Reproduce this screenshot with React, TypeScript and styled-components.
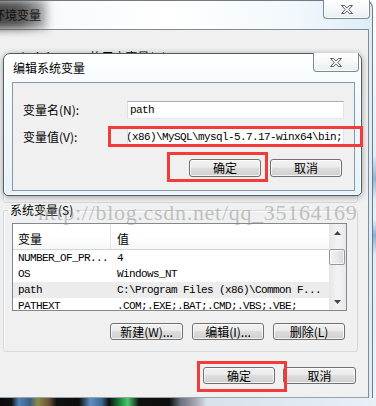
import React from 'react';
import styled, { createGlobalStyle } from 'styled-components';

const GlobalStyle = createGlobalStyle`
  * { box-sizing: border-box; }
  html, body { margin: 0; padding: 0; }
  body {
    width: 376px;
    height: 406px;
    overflow: hidden;
    font-family: "Noto Sans CJK SC", "Liberation Sans", sans-serif;
    font-size: 12px;
    color: #000;
  }
`;

const mono = `"Liberation Mono", "DejaVu Sans Mono", monospace`;

const systemVars = [
  { name: 'NUMBER_OF_PR...', value: '4' },
  { name: 'OS', value: 'Windows_NT' },
  { name: 'path', value: 'C:\\Program Files (x86)\\Common F...', selected: true },
  { name: 'PATHEXT', value: '.COM;.EXE;.BAT;.CMD;.VBS;.VBE;' },
];

const CloseGlyph = () => (
  <svg width="14" height="11" viewBox="0 0 14 11">
    <polygon
      points="1.5,1.5 4.6,1.5 7,3.9 9.4,1.5 12.5,1.5 8.8,5.5 12.5,9.5 9.4,9.5 7,7.1 4.6,9.5 1.5,9.5 5.2,5.5"
      fill="#f3f3f3"
      stroke="#5c5c5c"
      strokeWidth="1"
      strokeLinejoin="round"
    />
  </svg>
);

const Arrow = ({ up }: { up?: boolean }) => (
  <svg width="7" height="4" viewBox="0 0 7 4">
    <polygon points={up ? '0,4 3.5,0 7,4' : '0,0 3.5,4 7,0'} fill="#444" />
  </svg>
);

export default function App() {
  return (
    <>
      <GlobalStyle />
      <Screen>
        <Window>
          <TitleBar>
            <Title>环境变量</Title>
            <CloseButton $w={47}>
              <CloseGlyph />
            </CloseButton>
          </TitleBar>
          <Client>
            <UserGroup>
              <Legend>Administrator 的用户变量(U)</Legend>
            </UserGroup>
            <GroupBox>
              <Legend>系统变量(S)</Legend>
              <ListView>
                <ListBody>
                  <HeaderRow>
                    <HeaderCell $first>变量</HeaderCell>
                    <HeaderCell>值</HeaderCell>
                  </HeaderRow>
                  {systemVars.map((v) => (
                    <Row key={v.name} $selected={!!v.selected}>
                      <Cell $first>{v.name}</Cell>
                      <Cell>{v.value}</Cell>
                    </Row>
                  ))}
                </ListBody>
                <ScrollBar>
                  <ArrowBox>
                    <Arrow up />
                  </ArrowBox>
                  <Track>
                    <Thumb />
                  </Track>
                  <ArrowBox>
                    <Arrow />
                  </ArrowBox>
                </ScrollBar>
              </ListView>
              <ButtonRow $top={12} $right={2}>
                <Button $w={73} $h={17}>新建(W)...</Button>
                <Button $w={72} $h={17}>编辑(I)...</Button>
                <Button $w={72} $h={17}>删除(L)</Button>
              </ButtonRow>
            </GroupBox>
            <ButtonRow $top={15} $right={2} $gap={8}>
              <Button $w={72} $h={17}>确定</Button>
              <Button $w={73} $h={17}>取消</Button>
            </ButtonRow>
          </Client>
        </Window>
        <Taskbar />

        <Dialog>
          <DialogTitleBar>
            <DialogTitle>编辑系统变量</DialogTitle>
            <CloseButton $w={46}>
              <CloseGlyph />
            </CloseButton>
          </DialogTitleBar>
          <DialogClient>
            <FieldRow>
              <FieldLabel>变量名(N):</FieldLabel>
              <TextBox>path</TextBox>
            </FieldRow>
            <FieldRow $top={9}>
              <FieldLabel>变量值(V):</FieldLabel>
              <TextBox $indent={-2}>(x86)\MySQL\mysql-5.7.17-winx64\bin;</TextBox>
            </FieldRow>
            <ButtonRow $top={13} $right={2}>
              <Button $w={72} $h={18}>确定</Button>
              <Button $w={72} $h={18}>取消</Button>
            </ButtonRow>
          </DialogClient>
        </Dialog>

        <Watermark>http://blog.csdn.net/qq_35164169</Watermark>

        <Highlight style={{ left: 108, top: 126, width: 255, height: 21 }} />
        <Highlight style={{ left: 167, top: 152, width: 101, height: 30 }} />
        <Highlight style={{ left: 197, top: 361, width: 90, height: 31 }} />
      </Screen>
    </>
  );
}

const Screen = styled.div`
  position: relative;
  width: 376px;
  height: 406px;
  overflow: hidden;
  display: flex;
  flex-direction: column;
  background: linear-gradient(
    180deg,
    #ffffff 0%,
    #e4eef6 38%,
    #8fb4d8 44%,
    #e2edf6 49%,
    #e8f1f8 54%,
    #86afd8 58%,
    #e4edf6 63%,
    #eef4f9 100%
  );
`;

const Window = styled.div`
  flex: 1;
  display: flex;
  flex-direction: column;
  margin-right: 3px;
  border-top: 1px solid #6f7a83;
  border-right: 1px solid #6f7a83;
  border-top-right-radius: 8px;
  background: linear-gradient(90deg, #f4f7f9 0%, #ffffff 45%, #f2f8fc 80%, #dcedf8 100%);
`;

const TitleBar = styled.div`
  height: 28px;
  flex: none;
  display: flex;
  align-items: flex-start;
`;

const Title = styled.div`
  position: relative;
  z-index: 0;
  margin: 6px 0 0 -7px;
  font-size: 12px;
  line-height: 16px;
  color: #111;

  &::before {
    content: '';
    position: absolute;
    inset: -7px -6px -6px -10px;
    z-index: -1;
    background: linear-gradient(90deg, #3d3d3d 0%, #555 60%, rgba(90, 90, 90, 0.4) 100%);
    filter: blur(4px);
  }
`;

const CloseButton = styled.div<{ $w: number }>`
  width: ${({ $w }) => $w}px;
  height: 19px;
  margin: -1px 2px 0 auto;
  display: flex;
  align-items: center;
  justify-content: center;
  border: 1px solid #7d8891;
  border-top: none;
  border-radius: 0 0 4px 4px;
  background: linear-gradient(180deg, #ffffff 0%, #f3f6f8 60%, #e6edf2 100%);
  box-shadow: inset 0 0 0 1px rgba(255, 255, 255, 0.8);
`;

const Client = styled.div`
  width: 369px;
  flex: 1;
  display: flex;
  flex-direction: column;
  padding: 20px 10px 0 3px;
  background: #f0f0f0;
  border-top: 1px solid #838b91;
  border-right: 1px solid #838b91;
  border-bottom: 1px solid #9aa3aa;
`;

const GroupBox = styled.fieldset`
  margin: 0;
  padding: 6px 10px 11px 8px;
  min-width: 0;
  border: 1px solid #d3d9dd;
  border-radius: 3px;
  box-shadow: inset 1px 1px 0 #ffffff;
  display: flex;
  flex-direction: column;
`;

const UserGroup = styled(GroupBox)`
  height: 153px;
`;

const Legend = styled.legend`
  margin-left: -4px;
  padding: 0 2px;
  font-size: 12px;
  line-height: 14px;
  color: #000;
`;

const ListView = styled.div`
  height: 88px;
  display: flex;
  border: 1px solid #828790;
  background: #ffffff;
`;

const ListBody = styled.div`
  flex: 1;
  overflow: hidden;
`;

const HeaderRow = styled.div`
  height: 26px;
  display: flex;
  border-bottom: 1px solid #d5d5d5;
  background: linear-gradient(180deg, #ffffff 0%, #ffffff 50%, #f6f7f8 100%);
`;

const HeaderCell = styled.div<{ $first?: boolean }>`
  width: ${({ $first }) => ($first ? '98px' : 'auto')};
  flex: ${({ $first }) => ($first ? 'none' : '1')};
  padding: 8px 0 0 ${({ $first }) => ($first ? 5 : 6)}px;
  font-size: 12px;
  line-height: 14px;
  border-right: ${({ $first }) => ($first ? '1px solid #e3e5e7' : 'none')};
`;

const Row = styled.div<{ $selected?: boolean }>`
  height: 16px;
  display: flex;
  background: ${({ $selected }) => ($selected ? '#ececec' : 'transparent')};
`;

const Cell = styled.div<{ $first?: boolean }>`
  width: ${({ $first }) => ($first ? '98px' : 'auto')};
  flex: ${({ $first }) => ($first ? 'none' : '1')};
  padding-left: ${({ $first }) => ($first ? 5 : 6)}px;
  font-family: ${mono};
  font-size: 11px;
  letter-spacing: -0.6px;
  line-height: 16px;
  white-space: nowrap;
  overflow: hidden;
`;

const ScrollBar = styled.div`
  width: 17px;
  flex: none;
  display: flex;
  flex-direction: column;
  background: linear-gradient(90deg, #e6e6e6 0%, #f3f3f3 50%, #e9e9e9 100%);
`;

const ArrowBox = styled.div`
  height: 17px;
  display: flex;
  align-items: center;
  justify-content: center;
`;

const Track = styled.div`
  flex: 1;
  padding: 8px 1px 0 0;
`;

const Thumb = styled.div`
  height: 16px;
  border: 1px solid #979797;
  border-radius: 2px;
  background: linear-gradient(90deg, #f3f3f3 0%, #e8e8e8 50%, #d8d8d8 100%);
  box-shadow: inset 0 0 0 1px rgba(255, 255, 255, 0.7);
`;

const ButtonRow = styled.div<{ $top: number; $right: number; $gap?: number }>`
  display: flex;
  justify-content: flex-end;
  gap: ${({ $gap }) => $gap ?? 9}px;
  margin-top: ${({ $top }) => $top}px;
  padding-right: ${({ $right }) => $right}px;
`;

const Button = styled.div<{ $w: number; $h: number }>`
  width: ${({ $w }) => $w}px;
  height: ${({ $h }) => $h}px;
  display: flex;
  align-items: center;
  justify-content: center;
  font-size: 12px;
  line-height: 14px;
  white-space: nowrap;
  border: 1px solid #707070;
  border-radius: 3px;
  background: linear-gradient(180deg, #f2f2f2 0%, #ebebeb 45%, #dddddd 50%, #cfcfcf 100%);
  box-shadow: inset 0 0 0 1px rgba(255, 255, 255, 0.75);
`;

const Taskbar = styled.div`
  height: 8px;
  flex: none;
  background: linear-gradient(
    90deg,
    #0b0b0b 0%,
    #111 3%,
    #4f84b8 5%,
    #3c5e80 8%,
    #8c8a48 10%,
    #6e5236 13%,
    #121212 15%,
    #0c0c0c 21%,
    #5f8fc0 24%,
    #3e6a96 27%,
    #0e0e0e 29%,
    #1e8a3e 32%,
    #4ac66c 34%,
    #101010 37%,
    #0d0d0d 45%,
    #6b6f80 48%,
    #a6a4b0 52%,
    #d7e1ea 55%,
    #e9f0f6 100%
  );
`;

const Dialog = styled.div`
  position: absolute;
  left: 3px;
  top: 53px;
  width: 359px;
  height: 143px;
  display: flex;
  flex-direction: column;
  border: 1px solid #505b63;
  border-radius: 7px 7px 5px 5px;
  background: linear-gradient(180deg, #ffffff 0%, #f1f9fd 35%, #e4f3fa 100%);
  box-shadow: 0 1px 6px rgba(0, 0, 0, 0.35), inset 0 0 0 1px rgba(255, 255, 255, 0.85);
`;

const DialogTitleBar = styled.div`
  height: 28px;
  flex: none;
  display: flex;
  align-items: flex-start;
  padding-left: 9px;
`;

const DialogTitle = styled.div`
  margin-top: 7px;
  font-size: 12px;
  line-height: 14px;
  color: #000;
`;

const DialogClient = styled.div`
  flex: 1;
  margin: 0 6px 4px 8px;
  padding: 18px 10px 0 10px;
  border: 1px solid #8a98a3;
  background: #f0f0f0;
`;

const FieldRow = styled.div<{ $top?: number }>`
  display: grid;
  grid-template-columns: 104px 1fr;
  align-items: center;
  margin-top: ${({ $top }) => $top ?? 0}px;
`;

const FieldLabel = styled.div`
  font-size: 12px;
  line-height: 14px;
`;

const TextBox = styled.div<{ $indent?: number }>`
  height: 18px;
  padding-left: ${({ $indent }) => ($indent !== undefined ? 0 : 2)}px;
  text-indent: ${({ $indent }) => $indent ?? 0}px;
  border: 1px solid #abadb3;
  border-color: #abadb3 #e2e3ea #e3e9ef #dbdfe6;
  background: #ffffff;
  font-family: ${mono};
  font-size: 11px;
  letter-spacing: -0.6px;
  line-height: 16px;
  white-space: nowrap;
  overflow: hidden;
`;

const Watermark = styled.div`
  position: absolute;
  left: 38px;
  top: 200px;
  font-family: "Liberation Serif", serif;
  font-size: 22px;
  line-height: 26px;
  letter-spacing: 0.7px;
  color: rgba(140, 140, 140, 0.5);
  white-space: nowrap;
  pointer-events: none;
`;

const Highlight = styled.div`
  position: absolute;
  border: 3px solid #f23b3b;
  pointer-events: none;
`;
